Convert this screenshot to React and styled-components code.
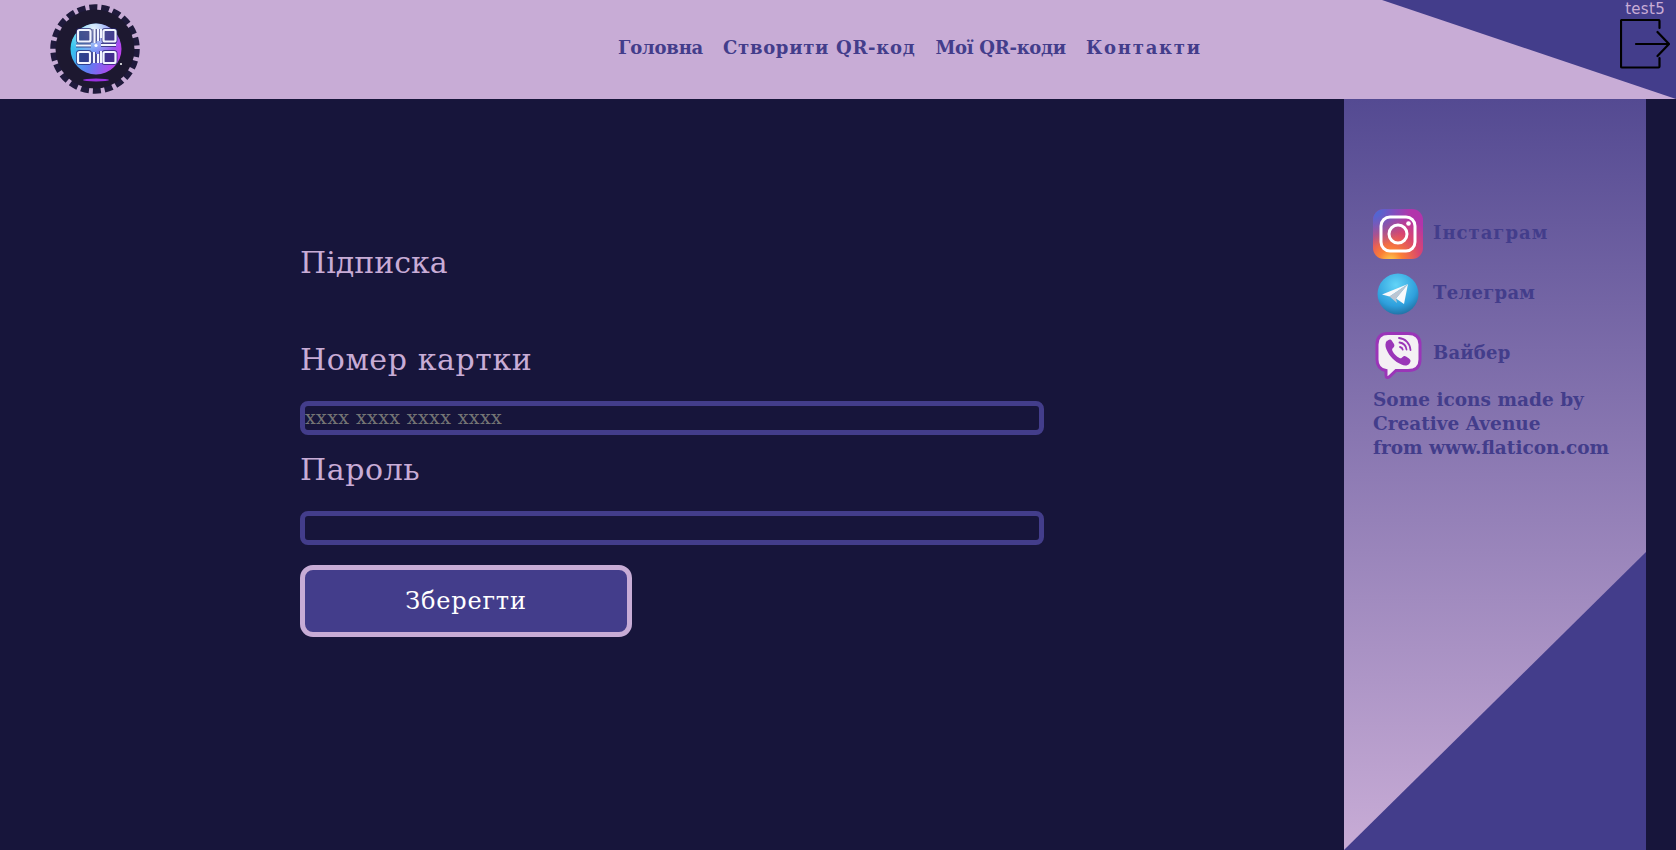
import React from "react";
import styled, { createGlobalStyle } from "styled-components";

const Global = createGlobalStyle`
  html, body { margin: 0; padding: 0; background: #17153b; }
  * { box-sizing: border-box; }
  body { font-family: "DejaVu Serif", "Liberation Serif", serif; overflow: hidden; }
`;

const Page = styled.div`
  width: 1676px;
  height: 850px;
  display: flex;
  flex-direction: column;
  overflow: hidden;
`;

const Header = styled.header`
  position: relative;
  height: 99px;
  flex: none;
  background: #c8acd6;
  display: flex;
  align-items: center;
  padding-left: 50px;
  &::after {
    content: "";
    position: absolute;
    top: 0;
    right: 0;
    width: 294px;
    height: 99px;
    background: #433d8b;
    clip-path: polygon(0 0, 100% 0, 100% 100%);
  }
`;

const LogoBox = styled.div`
  width: 90px;
  height: 90px;
  flex: none;
  margin-bottom: 2px;
`;

const Nav = styled.nav`
  display: flex;
  gap: 20px;
  margin-left: 478px;
  margin-top: -5px;
`;

const NavLink = styled.a`
  font-size: 18px;
  font-weight: 700;
  letter-spacing: ${(p) => p.$spacing || 0}px;
  color: #433d8b;
  white-space: nowrap;
`;

const UserBox = styled.div`
  position: absolute;
  top: 0;
  right: 6px;
  z-index: 1;
  width: 50px;
  display: flex;
  flex-direction: column;
  align-items: flex-end;
`;

const UserName = styled.span`
  font-family: "DejaVu Sans", "Liberation Sans", sans-serif;
  font-size: 15px;
  letter-spacing: 0.3px;
  line-height: 19px;
  color: #c8acd6;
  margin-right: 5px;
  white-space: nowrap;
`;

const Body = styled.div`
  flex: 1;
  display: flex;
  min-height: 0;
`;

const Main = styled.main`
  flex: 1;
  padding: 145px 0 0 300px;
`;

const Title = styled.h1`
  margin: 0 0 59px;
  font-size: 30px;
  line-height: 38px;
  font-weight: 400;
  color: #c8acd6;
`;

const Field = styled.label`
  display: block;
`;

const FieldLabel = styled.span`
  display: block;
  font-size: 30px;
  letter-spacing: 0.6px;
  line-height: 38px;
  color: #c8acd6;
  margin-bottom: 22px;
`;

const Input = styled.input`
  display: block;
  width: 744px;
  height: 34px;
  margin-bottom: 16px;
  padding: 0 0 3px;
  background: #17153b;
  border: 5px solid #433d8b;
  border-radius: 8px;
  outline: none;
  font-family: "DejaVu Serif", serif;
  font-size: 19px;
  letter-spacing: 0.4px;
  color: #fff;
  &::placeholder { color: #757575; opacity: 1; }
`;

const SaveButton = styled.button`
  display: block;
  width: 332px;
  height: 72px;
  margin-top: 20px;
  background: #433d8b;
  border: 5px solid #c8acd6;
  border-radius: 13px;
  color: #fff;
  font-family: "DejaVu Serif", serif;
  font-size: 24px;
  letter-spacing: 0.8px;
`;

const Sidebar = styled.aside`
  position: relative;
  width: 302px;
  flex: none;
  margin-right: 30px;
  padding: 105px 0 0 29px;
  background: linear-gradient(#544a92, #c8acd6);
  &::after {
    content: "";
    position: absolute;
    right: 0;
    bottom: 0;
    width: 302px;
    height: 298px;
    background: #433d8b;
    clip-path: polygon(100% 0, 100% 100%, 0 100%);
  }
`;

const SocialRow = styled.a`
  display: flex;
  align-items: center;
  height: 60px;
  gap: 10px;
  color: #433d8b;
  font-size: 18px;
  font-weight: 700;
`;

const SocialLabel = styled.span`
  margin-bottom: 4px;
  letter-spacing: ${(p) => p.$spacing || 0}px;
`;

const IconBox = styled.span`
  width: 50px;
  height: 50px;
  flex: none;
  display: block;
`;

const Credit = styled.p`
  margin: 4px 0 0;
  font-size: 18.5px;
  line-height: 24px;
  font-weight: 700;
  color: #433d8b;
  white-space: nowrap;
`;

const Logo = () => (
  <svg width="90" height="90" viewBox="0 0 90 90" style={{ display: "block" }}>
    <defs>
      <linearGradient id="lg" x1="0" y1="0.3" x2="1" y2="0.7">
        <stop offset="0" stopColor="#2ed4ee" />
        <stop offset="0.5" stopColor="#5f7cf2" />
        <stop offset="1" stopColor="#c838ec" />
      </linearGradient>
      <radialGradient id="lw" cx="0.45" cy="0.1" r="0.55">
        <stop offset="0" stopColor="#ffffff" stopOpacity="0.85" />
        <stop offset="1" stopColor="#ffffff" stopOpacity="0" />
      </radialGradient>
    </defs>
    <circle cx="45" cy="45" r="41.5" fill="none" stroke="#1f1a3c" strokeWidth="6.5" strokeDasharray="8 3.85" />
    <circle cx="45" cy="45" r="39.5" fill="#1d1830" />
    <circle cx="46" cy="45" r="25.5" fill="url(#lg)" />
    <circle cx="46" cy="45" r="25.5" fill="url(#lw)" />
    <g fill="#24246e" stroke="#24246e" strokeWidth="4" strokeLinejoin="round" opacity="0.75">
      <rect x="28" y="26" width="12.500" height="11.500" rx="1.500" />
      <rect x="53.500" y="26" width="12" height="11.500" rx="1.500" />
      <rect x="28" y="48" width="12" height="11" rx="1.500" />
      <rect x="53.500" y="48" width="12" height="11" rx="1.500" />
      <path d="M44.500 25v14M48 25v12M51 25v9M26 41.500h15M51 41h15M44 48v11M48 50v9M51 47v12" fill="none" />
    </g>
    <g fill="none" stroke="#f2f5ff" strokeWidth="2.200" strokeLinejoin="round">
      <rect x="28" y="26" width="12.500" height="11.500" rx="1.500" />
      <rect x="53.500" y="26" width="12" height="11.500" rx="1.500" />
      <rect x="28" y="48" width="12" height="11" rx="1.500" />
      <rect x="53.500" y="48" width="12" height="11" rx="1.500" />
      <path d="M44.500 25v14M48 25v12M51 25v9M26 41.500h15M51 41h15M44 48v11M48 50v9M51 47v12" />
    </g>
    <circle cx="46" cy="41.500" r="1.600" fill="#fff" />
    <circle cx="71" cy="60" r="1" fill="#fff" />
    <ellipse cx="46" cy="76" rx="13" ry="1.500" fill="#9a30e0" />
  </svg>
);

const LogoutIcon = () => (
  <svg width="50" height="50" viewBox="0 0 50 50" fill="none" stroke="#000" strokeWidth="2.200" strokeLinecap="round" strokeLinejoin="round" style={{ display: "block" }}>
    <path d="M39.500 9V2a1 1 0 0 0-1-1H2a1 1 0 0 0-1 1V47.500a1 1 0 0 0 1 1H38.500a1 1 0 0 0 1-1V39" />
    <path d="M16 25H49M37.500 13l11.500 12-11.500 12" />
  </svg>
);

const InstagramIcon = () => (
  <svg width="50" height="50" viewBox="0 0 50 50" style={{ display: "block" }}>
    <defs>
      <radialGradient id="ig" cx="0.35" cy="1.05" r="1.2">
        <stop offset="0" stopColor="#fdd24f" />
        <stop offset="0.2" stopColor="#fb7f35" />
        <stop offset="0.5" stopColor="#d9466f" />
        <stop offset="0.8" stopColor="#b234ab" />
        <stop offset="1" stopColor="#b234ab" />
      </radialGradient>
      <radialGradient id="igb" cx="0" cy="0" r="0.75">
        <stop offset="0" stopColor="#3f70d8" />
        <stop offset="1" stopColor="#3f70d8" stopOpacity="0" />
      </radialGradient>
    </defs>
    <rect width="50" height="50" rx="11" fill="url(#ig)" />
    <rect width="50" height="50" rx="11" fill="url(#igb)" />
    <rect x="8" y="8" width="34" height="34" rx="9" fill="none" stroke="#fff" strokeWidth="3" />
    <circle cx="25" cy="25" r="9" fill="none" stroke="#fff" strokeWidth="3" />
    <circle cx="35.500" cy="14.500" r="2.300" fill="#fff" />
  </svg>
);

const TelegramIcon = () => (
  <svg width="50" height="50" viewBox="0 0 50 50" style={{ display: "block" }}>
    <defs>
      <radialGradient id="tg" cx="0.45" cy="0.28" r="0.85">
        <stop offset="0" stopColor="#62d4f7" />
        <stop offset="0.6" stopColor="#2e9fdc" />
        <stop offset="1" stopColor="#1a5a88" />
      </radialGradient>
    </defs>
    <circle cx="25" cy="25" r="20.500" fill="url(#tg)" />
    <path d="M9 25.500 L35 15 L31 35 L23 29.500 L35 15 L16.500 27.500 Z" fill="#f7f9fb" />
    <path d="M16.500 27.500 L35 15 L23 29.500 L24 34 Z" fill="#bcc6d2" />
  </svg>
);

const ViberIcon = () => (
  <svg width="50" height="50" viewBox="0 0 50 50" style={{ display: "block" }}>
    <path d="M15 4.500h20c8 0 12 4 12 11v15c0 7-4 11-12 11H23l-7 6.500c-1.500 1-3 .5-3-1.500V41.500c-6-1-9-5-9-11v-15C4 8.500 7 4.500 15 4.500z" fill="#f4f0f4" stroke="#9a35b8" strokeWidth="3" />
    <path d="M14 12c2-2 4-2 5 0l2 3c1 2 0 3-1.500 4.500-.5.5-.5 1.500 0 2.500 1.500 3 4 5.500 7 7 1 .5 1.500.5 2.500-.5 1.500-1.500 2.500-2 4-1l3 2c2 1.500 2 3 .5 5-2 2.500-5 2.500-8 1-7-3-12-8-15-15-1.500-3.500-1.500-6.500.5-9z" fill="#9a35b8" />
    <path d="M26 9c6 .5 11 5 11.500 12M26.500 13.500c4 .5 6.500 3 7 7M27 18c1.500.3 2.500 1.300 2.700 2.700" fill="none" stroke="#9a35b8" strokeWidth="1.800" strokeLinecap="round" />
  </svg>
);

export default function App() {
  return (
    <Page>
      <Global />
      <Header>
        <LogoBox><Logo /></LogoBox>
        <Nav>
          <NavLink $spacing={-0.2}>Головна</NavLink>
          <NavLink $spacing={0.7}>Створити QR-код</NavLink>
          <NavLink $spacing={-0.27}>Мої QR-коди</NavLink>
          <NavLink $spacing={1.75}>Контакти</NavLink>
        </Nav>
        <UserBox>
          <UserName>test5</UserName>
          <LogoutIcon />
        </UserBox>
      </Header>
      <Body>
        <Main>
          <Title>Підписка</Title>
          <Field>
            <FieldLabel>Номер картки</FieldLabel>
            <Input placeholder="xxxx xxxx xxxx xxxx" />
          </Field>
          <Field>
            <FieldLabel>Пароль</FieldLabel>
            <Input />
          </Field>
          <SaveButton>Зберегти</SaveButton>
        </Main>
        <Sidebar>
          <SocialRow><IconBox><InstagramIcon /></IconBox><SocialLabel $spacing={1}>Інстаграм</SocialLabel></SocialRow>
          <SocialRow><IconBox><TelegramIcon /></IconBox><SocialLabel $spacing={0.3}>Телеграм</SocialLabel></SocialRow>
          <SocialRow><IconBox><ViberIcon /></IconBox><SocialLabel $spacing={0.2}>Вайбер</SocialLabel></SocialRow>
          <Credit>Some icons made by<br />Creative Avenue<br />from www.flaticon.com</Credit>
        </Sidebar>
      </Body>
    </Page>
  );
}
